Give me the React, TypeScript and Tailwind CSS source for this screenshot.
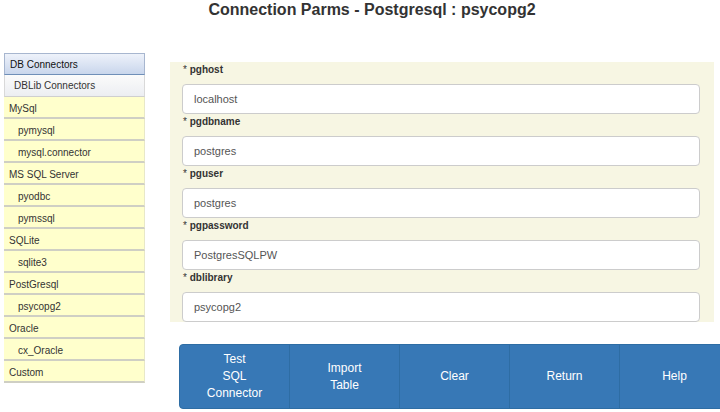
import React from 'react';

const sideItems: { label: string; sub?: boolean }[] = [
  { label: 'MySql' },
  { label: 'pymysql', sub: true },
  { label: 'mysql.connector', sub: true },
  { label: 'MS SQL Server' },
  { label: 'pyodbc', sub: true },
  { label: 'pymssql', sub: true },
  { label: 'SQLite' },
  { label: 'sqlite3', sub: true },
  { label: 'PostGresql' },
  { label: 'psycopg2', sub: true },
  { label: 'Oracle' },
  { label: 'cx_Oracle', sub: true },
  { label: 'Custom' },
];

const fields = [
  { label: 'pghost', value: 'localhost' },
  { label: 'pgdbname', value: 'postgres' },
  { label: 'pguser', value: 'postgres' },
  { label: 'pgpassword', value: 'PostgresSQLPW' },
  { label: 'dblibrary', value: 'psycopg2' },
];

const buttons = [['Test', 'SQL', 'Connector'], ['Import', 'Table'], ['Clear'], ['Return'], ['Help']];

export default function App() {
  return (
    <div className="w-[720px] h-[412px] overflow-hidden bg-white font-['Liberation_Sans',Arial,sans-serif] text-[#333]">
      {/* Title */}
      <div className="h-[20px] pl-[24px] text-center text-[16px] leading-[20px] font-bold text-[#333]">
        Connection Parms - Postgresql : psycopg2
      </div>

      <div className="flex">
        {/* Sidebar */}
        <div className="ml-[4px] mt-[33px] w-[141px] shrink-0 text-[10px]">
          <div className="h-[22px] flex items-center pl-[5px] border border-[#a7b6cf] border-b-[#6f8fb8] bg-gradient-to-b from-[#eef2fa] to-[#c9d6ec] text-[#111]">
            DB Connectors
          </div>
          <div className="h-[22px] flex items-center pl-[9px] border-x border-[#d9d9d9] border-b border-b-[#cfcfcf] bg-gradient-to-b from-[#fbfbfb] to-[#eceef2] text-[#333]">
            DBLib Connectors
          </div>
          {sideItems.map((it) => (
            <div
              key={it.label}
              className={`h-[22px] flex items-center pt-[2px] bg-[#ffffcc] border-b-2 border-[#cfcfc4] border-r border-r-[#e8e8c8] ${it.sub ? 'pl-[14px]' : 'pl-[5px]'}`}
            >
              {it.label}
            </div>
          ))}
        </div>

        {/* Content */}
        <div className="ml-[25px] mt-[42px] flex-1 flex flex-col">
          <div className="w-[544px] bg-[#f7f6e3] pl-[12px] pr-[14px]">
            {fields.map((f) => (
              <div key={f.label}>
                <div className="h-[16px] text-[10px] leading-[16px] font-bold text-[#333] pl-[1px]">
                  <span className="font-normal">*</span> {f.label}
                </div>
                <div className="mt-[6px] h-[30px] flex items-center pl-[11px] bg-white border border-[#cccccc] rounded-[4px] text-[11px] text-[#555]">
                  {f.value}
                </div>
              </div>
            ))}
          </div>

          <div className="mt-[22px] ml-[9px] flex h-[65px] w-[560px]">
            {buttons.map((b, i) => (
              <button
                key={i}
                className={`w-[111px] shrink-0 h-full flex flex-col items-center justify-center bg-[#3778b6] border border-[#2e6da4] text-white text-[12px] leading-[17px] ${i === 0 ? 'rounded-l-[4px]' : '-ml-px'}`}
              >
                {b.map((l) => (
                  <span key={l}>{l}</span>
                ))}
              </button>
            ))}
          </div>
        </div>
      </div>
    </div>
  );
}
